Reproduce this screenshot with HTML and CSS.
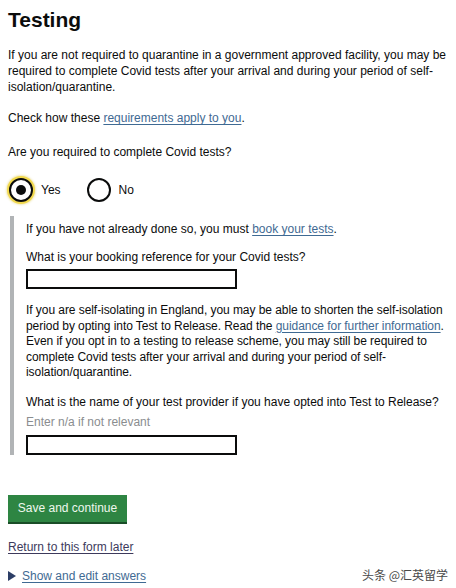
FILE: index.html
```html
<!DOCTYPE html>
<html lang="en">
<head>
<meta charset="utf-8">
<title>Testing</title>
<link rel="stylesheet" href="styles.css">
</head>
<body>
<main class="page">
  <h1 class="title">Testing</h1>
  <p class="body-text p-intro">If you are not required to quarantine in a government approved facility, you may be required to complete Covid tests after your arrival and during your period of self-isolation/quarantine.</p>
  <p class="body-text p-check">Check how these <a class="link" href="#">requirements apply to you</a>.</p>
  <fieldset class="fieldset">
    <legend class="legend">Are you required to complete Covid tests?</legend>
    <div class="radios">
      <label class="radio">
        <span class="radio-circle radio-checked radio-focus"></span>
        <span class="radio-label">Yes</span>
      </label>
      <label class="radio">
        <span class="radio-circle"></span>
        <span class="radio-label">No</span>
      </label>
    </div>
  </fieldset>
  <div class="conditional">
    <p class="body-text c-first">If you have not already done so, you must <a class="link" href="#">book your tests</a>.</p>
    <label class="field-label c-label1">What is your booking reference for your Covid tests?</label>
    <div class="input"></div>
    <p class="body-text c-para">If you are self-isolating in England, you may be able to shorten the self-isolation period by opting into Test to Release. Read the <a class="link" href="#">guidance for further information</a>. Even if you opt in to a testing to release scheme, you may still be required to complete Covid tests after your arrival and during your period of self-isolation/quarantine.</p>
    <label class="field-label c-label2">What is the name of your test provider if you have opted into Test to Release?</label>
    <div class="hint">Enter n/a if not relevant</div>
    <div class="input"></div>
  </div>
  <button class="button" type="button">Save and continue</button>
  <p class="body-text p-return"><a class="link link-visited" href="#">Return to this form later</a></p>
  <div class="details">
    <span class="details-arrow"></span>
    <a class="link" href="#">Show and edit answers</a>
  </div>
</main>
<div class="watermark">头条 @汇英留学</div>
</body>
</html>
```
FILE: styles.css
```css
html, body {
  margin: 0;
  padding: 0;
  background: #ffffff;
}
body {
  font-family: "Liberation Sans", Arial, "Noto Sans CJK SC", sans-serif;
  font-size: 12px;
  line-height: 16px;
  color: #0b0c0c;
}
.page {
  padding: 0 8px;
}
.title {
  margin: 7px 0 0;
  font-size: 21px;
  line-height: 26px;
  font-weight: 700;
}
.body-text {
  margin: 0;
}
.p-intro { margin-top: 14px; }
.p-check { margin-top: 15px; }
.link {
  color: #3f6a93;
  text-decoration: underline;
  text-underline-offset: 2px;
  text-decoration-thickness: 1px;
}
.link-visited { color: #3d3a5c; }
.fieldset {
  border: 0;
  margin: 18px 0 0;
  padding: 0;
  min-width: 0;
}
.legend {
  padding: 0;
  display: block;
  line-height: 16px;
}
.radios {
  display: flex;
  gap: 26px;
  margin-top: 17px;
  height: 26px;
  align-items: center;
  padding-left: 1px;
}
.radio {
  display: flex;
  align-items: center;
  gap: 8px;
}
.radio-circle {
  width: 20px;
  height: 20px;
  border: 2px solid #0b0c0c;
  border-radius: 50%;
  box-sizing: content-box;
  position: relative;
  background: #fff;
}
.radio-checked::after {
  content: "";
  position: absolute;
  left: 5px;
  top: 5px;
  width: 10px;
  height: 10px;
  border-radius: 50%;
  background: #0b0c0c;
}
.radio-focus {
  box-shadow: 0 0 0 2px #f2d94e, 0 0 2px 3px rgba(220, 200, 80, 0.4);
}
.radio-label {
  font-size: 12px;
}
.conditional {
  margin: 13px 0 0 2px;
  border-left: 4px solid #b1b4b6;
  padding: 5px 0 0 12px;
}
.field-label {
  display: block;
}
.c-label1 { margin-top: 12px; }
.input {
  width: 207px;
  height: 16px;
  border: 2px solid #0b0c0c;
  margin-top: 4px;
  box-sizing: content-box;
  background: #fff;
}
.c-para {
  margin-top: 14px;
  line-height: 15.6px;
  letter-spacing: -0.06px;
}
.c-label2 { margin-top: 13px; }
.hint {
  color: #8a8d8f;
  margin-top: 4px;
}
.hint + .input { margin-top: 5px; }
.button {
  display: block;
  margin-top: 40px;
  width: 119px;
  height: 27px;
  padding: 0;
  border: 0;
  background: #2e8543;
  box-shadow: 0 2px 0 #1a4d28;
  color: #eef8ee;
  font-family: inherit;
  font-size: 12px;
  line-height: 16px;
  border-radius: 0;
}
.p-return { margin-top: 17px; }
.details {
  margin-top: 13px;
  display: flex;
  align-items: center;
  gap: 6px;
}
.details-arrow {
  width: 0;
  height: 0;
  border-top: 5px solid transparent;
  border-bottom: 5px solid transparent;
  border-left: 8px solid #2c3e66;
}
.watermark {
  position: absolute;
  left: 362px;
  top: 567px;
  font-family: "Noto Sans CJK SC", sans-serif;
  font-size: 12px;
  line-height: 16px;
  white-space: nowrap;
  color: #4a4a4a;
}
```
